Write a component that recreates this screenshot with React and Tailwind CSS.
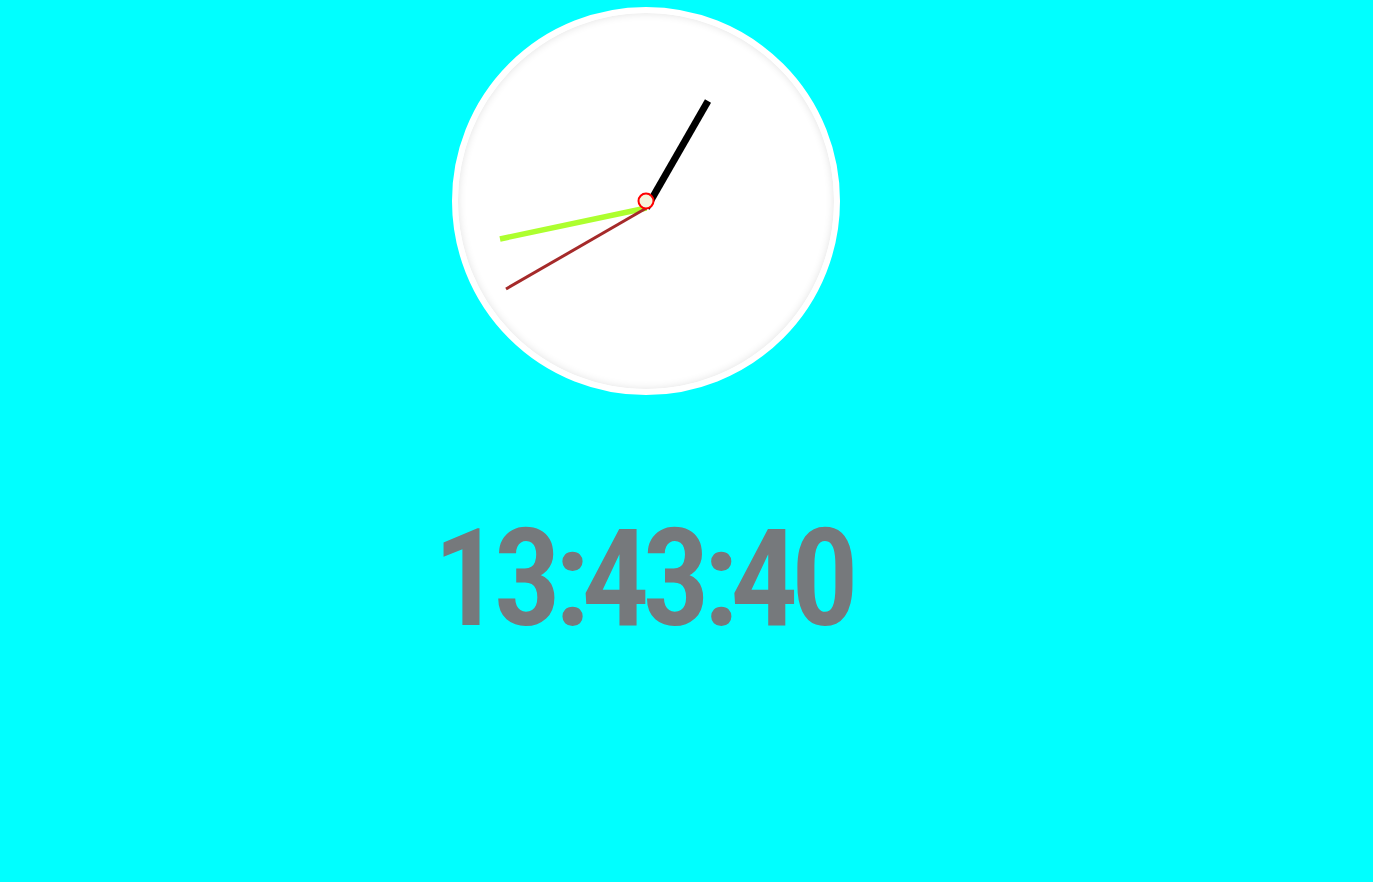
import React from "react";

const App = () => {
  return (
    <div className="min-h-screen w-full bg-[#00ffff] overflow-hidden">
      <div className="w-[1292px] flex flex-col items-center pt-[7px]">
        {/* Analog clock */}
        <div className="relative w-[388px] h-[388px] rounded-full bg-white border-[6px] border-white shadow-[inset_0_0_8px_rgba(0,0,0,0.12)] box-border">
          <svg
            className="absolute -top-[6px] -left-[6px]"
            width="388"
            height="388"
            viewBox="0 0 388 388"
          >
            {/* hour */}
            <line x1="194.5" y1="201" x2="256" y2="94" stroke="#000" strokeWidth="7" />
            {/* minute */}
            <line x1="194.5" y1="201" x2="48" y2="232" stroke="#adff2f" strokeWidth="5.5" />
            {/* second */}
            <line x1="194.5" y1="201" x2="54" y2="282" stroke="#a52a2a" strokeWidth="3" />
            <circle cx="194" cy="194" r="7.5" fill="#f5f5dc" stroke="#ff0000" strokeWidth="2" />
          </svg>
        </div>

        {/* Digital time */}
        <div
          className="mt-[102px] pr-[8px] text-[136px] font-semibold leading-[1.2] tracking-[-8px] text-[#76797c]"
          style={{ fontFamily: "'Roboto Condensed', Roboto, 'Liberation Sans', sans-serif" }}
        >
          13:43:40
        </div>
      </div>
    </div>
  );
};

export default App;
